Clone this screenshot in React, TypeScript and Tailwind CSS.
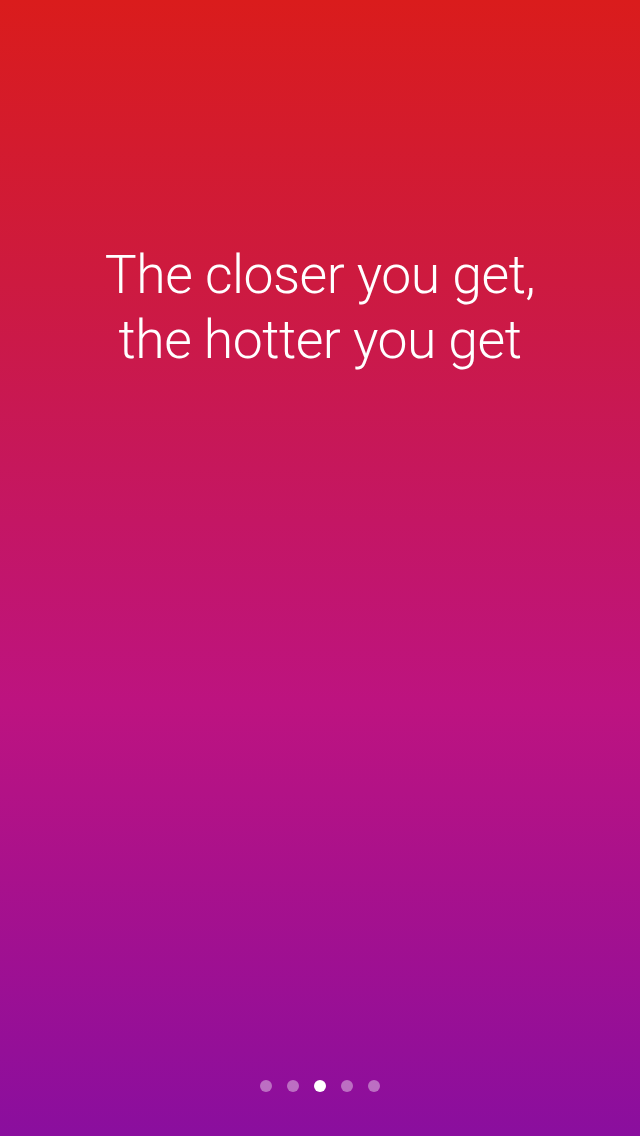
export default function App() {
  const dots = [0, 1, 2, 3, 4];
  const active = 2;

  return (
    <div className="h-[1136px] w-[640px] flex flex-col items-center bg-[linear-gradient(180deg,#da1c1c_0%,#cd1a40_25%,#bd1380_62%,#8a0e9e_100%)] font-['Roboto',sans-serif] text-white">
      {/* Headline */}
      <h1 className="mt-[242px] text-center text-[53.5px] leading-[65px] font-light tracking-[-0.5px]">
        The closer you get,
        <br />
        the hotter you get
      </h1>

      {/* Page dots */}
      <div className="mt-auto mb-[44px] flex gap-[15px]">
        {dots.map((d) => (
          <span
            key={d}
            className={
              d === active
                ? "h-3 w-3 rounded-full bg-white"
                : "h-3 w-3 rounded-full bg-white/40"
            }
          />
        ))}
      </div>
    </div>
  );
}
